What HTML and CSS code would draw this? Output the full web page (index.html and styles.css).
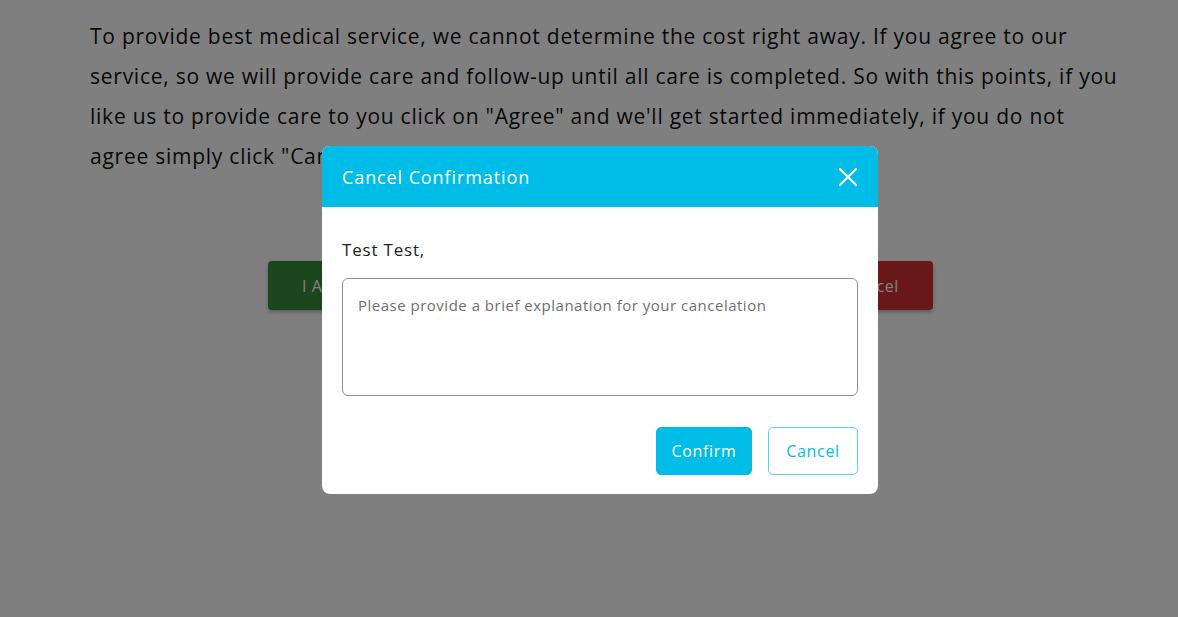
FILE: index.html
```html
<!DOCTYPE html>
<html lang="en">
<head>
<meta charset="utf-8">
<title>Consent</title>
<link rel="stylesheet" href="styles.css">
</head>
<body>
<main class="page">
  <p class="terms">To provide best medical service, we cannot determine the cost right away. If you agree to our service, so we will provide care and follow-up until all care is completed. So with this points, if you like us to provide care to you click on "Agree" and we'll get started immediately, if you do not agree simply click "Cancel".</p>
  <div class="actions">
    <button class="btn-agree">I Agree</button>
    <button class="btn-cancel">Cancel</button>
  </div>
</main>
<div class="overlay">
  <div class="modal">
    <div class="modal-header">
      <span class="modal-title">Cancel Confirmation</span>
      <svg class="close" width="20" height="20" viewBox="0 0 20 20"><path d="M2 2 L18 18 M18 2 L2 18" stroke="#fff" stroke-width="2.2" stroke-linecap="round"/></svg>
    </div>
    <div class="modal-body">
      <div class="name">Test Test,</div>
      <textarea class="reason" placeholder="Please provide a brief explanation for your cancelation"></textarea>
      <div class="modal-footer">
        <button class="btn-confirm">Confirm</button>
        <button class="btn-outline">Cancel</button>
      </div>
    </div>
  </div>
</div>
</body>
</html>
```
FILE: styles.css
```css
* { box-sizing: border-box; }
html, body { margin: 0; padding: 0; }
body {
  font-family: "Open Sans", "Noto Sans", sans-serif;
  background: #fff;
  color: #111;
  height: 617px;
  overflow: hidden;
}
.page {
  width: 1030px;
  margin-left: 90px;
  padding-top: 16px;
}
.terms {
  margin: 0;
  font-size: 21px;
  line-height: 40px;
  letter-spacing: 0.75px;
}
.actions {
  display: flex;
  justify-content: space-between;
  width: 665px;
  margin: 85px 0 0 178px;
}
.actions button {
  height: 49px;
  padding: 0 34px;
  border: none;
  border-radius: 4px;
  color: #fff;
  font-family: inherit;
  font-size: 16px;
  letter-spacing: 0.6px;
  box-shadow: 0 2px 4px rgba(0,0,0,0.3);
}
.btn-agree { background: #388e3c; }
.btn-cancel { background: #d32f2f; }
.overlay {
  position: fixed;
  inset: 0;
  background: rgba(0,0,0,0.5);
  padding: 146px 0 0 322px;
}
.modal {
  width: 556px;
  background: #fff;
  border-radius: 8px;
  overflow: hidden;
}
.modal-header {
  height: 61px;
  background: #00bde7;
  display: flex;
  align-items: center;
  justify-content: space-between;
  padding: 0 20px;
}
.modal-title {
  color: #fff;
  font-size: 18px;
  font-weight: 500;
  letter-spacing: 0.9px;
}
.close { display: block; }
.modal-body {
  padding: 31px 20px 19px;
}
.name {
  font-size: 17px;
  line-height: 24px;
  color: #222;
  letter-spacing: 0.8px;
}
.reason {
  display: block;
  width: 516px;
  height: 118px;
  margin-top: 16px;
  border: 1px solid #8f8f8f;
  border-radius: 6px;
  padding: 16px 15px;
  font-family: inherit;
  font-size: 15px;
  letter-spacing: 0.5px;
  resize: none;
}
.reason::placeholder { color: #707070; }
.modal-footer {
  display: flex;
  justify-content: flex-end;
  gap: 16px;
  margin-top: 31px;
}
.modal-footer button {
  height: 48px;
  border-radius: 5px;
  font-family: inherit;
  font-size: 16px;
  letter-spacing: 0.7px;
}
.btn-confirm {
  width: 96px;
  background: #00bde7;
  border: 1px solid #00bde7;
  color: #fff;
}
.btn-outline {
  width: 90px;
  background: #fff;
  border: 1px solid #5fd3ee;
  color: #00bde7;
}
```
